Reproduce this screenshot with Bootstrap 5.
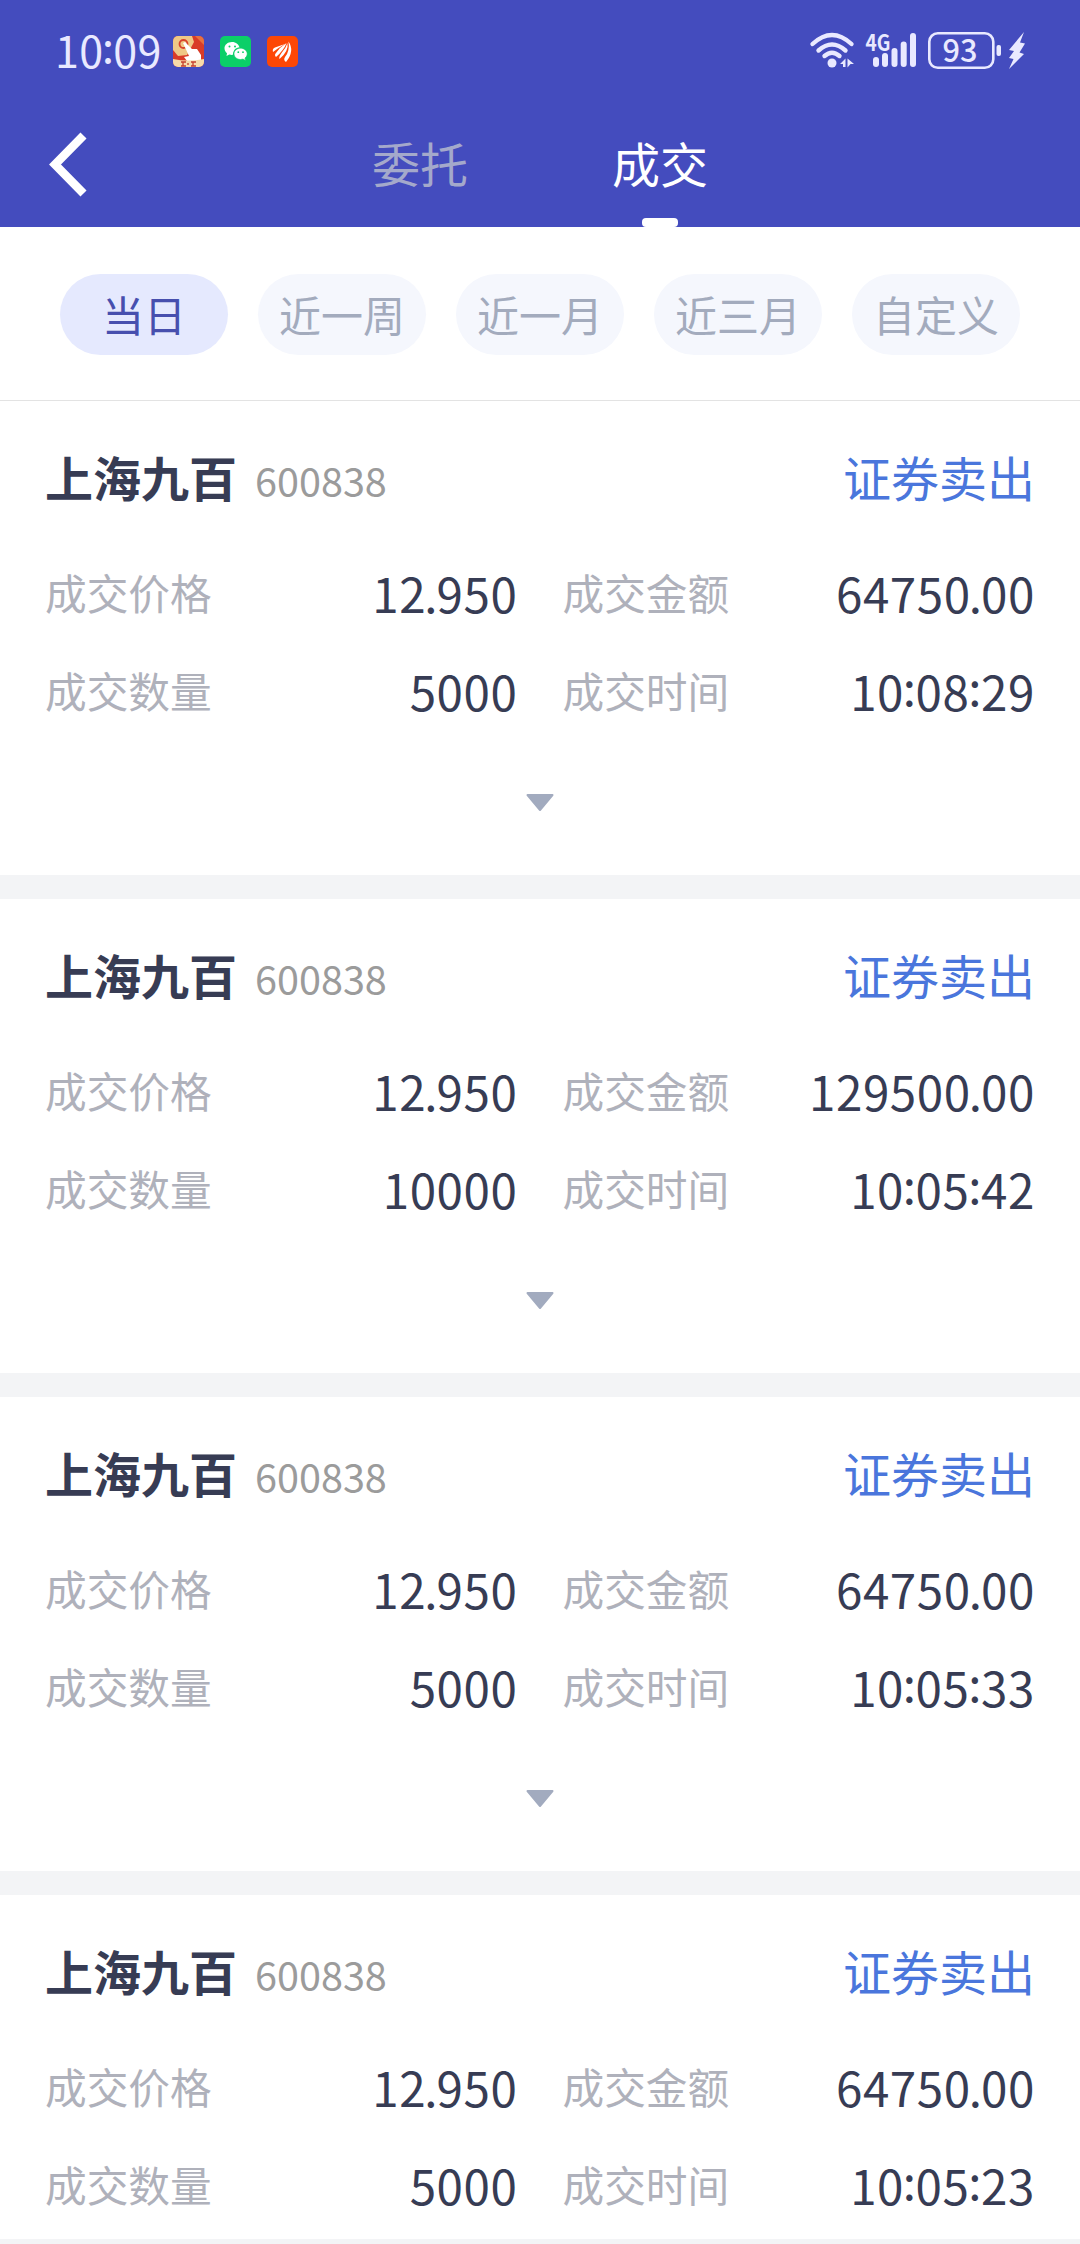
<!DOCTYPE html>
<html lang="zh-CN">
<head>
<meta charset="utf-8">
<meta name="viewport" content="width=device-width, initial-scale=1">
<title>成交</title>
<link href="https://cdn.jsdelivr.net/npm/bootstrap@5.3.0/dist/css/bootstrap.min.css" rel="stylesheet">
<style>
body{font-family:"Noto Sans CJK SC","Noto Sans",sans-serif;background:#fff;color:#373c54;width:1080px;height:2244px;overflow:hidden}
.top-area{background:#444cbe;height:227px}
.status-line{height:102px;padding:0 54px 0 55px;color:#e9e9ff}
.clock-text{font-size:43px;line-height:60px;letter-spacing:.3px;padding-bottom:4px}
.colon{position:relative;top:-5px;margin:0 -1px 0 -1.300px}
.point{margin-left:-2px;margin-right:-1.500px}
.app-icons{gap:16px;margin-left:11px}
.tab-line{height:125px;padding-left:48px}
.tab-item{width:240px;height:125px;font-size:48px;line-height:120px;color:#a4a9cb;text-align:center}
.tab-item.active{color:#fff}
.tab-item.active::after{content:"";position:absolute;left:102px;bottom:0;width:36px;height:9px;border-radius:4px;background:#fff}
.filters{height:174px;padding:2px 60px 0;gap:30px;border-bottom:1px solid #e3e3e3}
.filters .btn{width:168px;height:81px;padding:0 0 3px;border:0;font-size:42px;line-height:75px;background:#f5f7fd;color:#a3abbd}
.filters .btn.active{background:#e5e9fe;color:#474fae}
.deal{height:474px;padding:39px 45px 0}
.deal-gap{height:24px;background:#f3f4f6}
.deal-head{height:79px}
.stock-name{font-size:48px;line-height:72px;font-weight:700}
.stock-code{font-size:39.6px;line-height:72px;color:#9b9b9b;margin-left:18px}
.side{font-size:48px;line-height:72px;color:#4a76dc}
.pairs{gap:45px;height:98px}
.pairs>div{flex:1 1 0}
.field-label{font-size:41.700px;color:#afb1bb}
.field-value{font-size:47.500px;letter-spacing:.6px;padding-top:2px}
.more-toggle{margin-top:55px}
.last-strip{height:5px;background:#f3f4f6}
.deal.cut{height:344px;overflow:hidden}
</style>
<script src="https://cdn.jsdelivr.net/npm/bootstrap@5.3.0/dist/js/bootstrap.bundle.min.js"></script>
</head>
<body>
<header class="top-area">
  <div class="status-line d-flex align-items-center">
    <span class="clock-text">10<span class="colon">:</span>09</span>
    <div class="app-icons d-flex">
      <svg width="31" height="31" viewBox="0 0 31 31"><defs><clipPath id="rc"><rect width="31" height="31" rx="5"/></clipPath></defs><g clip-path="url(#rc)"><rect width="31" height="31" fill="#d93b28"/><path d="M0 0H19L21 6 14 19 5 20 0 14Z" fill="#efc886"/><path d="M22 0L31 0V9Z" fill="#e8703f"/><circle cx="10.500" cy="8" r="4" fill="none" stroke="#d8432c" stroke-width="1.800"/><path d="M10 7L12 6 19 13 24 13 28 19V25H14L11 21 16 20Z" fill="#fff"/><path d="M0 23Q15 26 31 23V31H0Z" fill="#f7dba9"/><path d="M8 26H13M10 26V30M8 30H13M15 27V29M18 26H23M20 26V30M18 30H23" stroke="#c6402d" stroke-width="1.300"/></g></svg>
      <svg width="31" height="31" viewBox="0 0 31 31"><rect width="31" height="31" rx="5" fill="#0bcf68"/><path d="M12 6C7.500 6 4.500 9 4.500 12.300 4.500 14.500 5.500 16 7 17.200L6.500 20 9.300 18.600C11 19 12 19 13 18.800 13 14 16 11.500 19.500 11.500 19 8.500 16 6 12 6Z" fill="#fff"/><path d="M20.500 12.200C16.800 12.200 14 14.700 14 17.800S16.800 23.500 20.500 23.500L23 23.100 25.500 24.500 25 22C26.500 21 27.200 19.500 27.200 17.800 27.200 14.700 24.200 12.200 20.500 12.200Z" fill="#fff" stroke="#0bcf68" stroke-width=".6"/><g fill="#0bcf68"><circle cx="9.500" cy="10.500" r="1"/><circle cx="15" cy="10.500" r="1"/><circle cx="18.300" cy="16.200" r=".9"/><circle cx="23" cy="16.200" r=".9"/></g></svg>
      <svg width="31" height="31" viewBox="0 0 31 31"><rect width="31" height="31" rx="5" fill="#fd4705"/><g fill="#fff"><path d="M6 16Q5 12.500 8 11.500Q13 9.500 18 8Q11 12 6 16Z"/><path d="M9 21Q7 19 9 17Q13 11 19.500 7Q17 14 9 21Z"/><path d="M12.500 23Q11.500 21 14.500 17Q19 12 20.500 7Q22 15 12.500 23Z"/><path d="M19 26Q16 24 18 21Q23 15 21.500 5.500Q28 15 19 26Z"/></g></svg>
    </div>
    <svg class="ms-auto" width="218" height="66" viewBox="807 18 218 66" fill="#e9e9ff">
      <g fill="none" stroke="#e9e9ff" stroke-width="4.400" stroke-linecap="round"><path d="M811.500 44Q831 26 850.500 44"/><path d="M817.500 50.500Q831 38.500 844.500 50.500"/><path d="M823.500 56Q831 49.500 838.500 56"/></g>
      <circle cx="831" cy="63" r="4.500"/><path d="M839 64L844.500 58.500V67H842V64ZM846.500 58.500L853 64H849.500L846.500 67.500Z"/>
      <text x="864.500" y="50.500" font-size="22" font-weight="700" textLength="25" lengthAdjust="spacingAndGlyphs" font-family="Noto Sans CJK SC, sans-serif">4G</text>
      <rect x="872" y="57" width="6" height="10" rx="3"/><rect x="881" y="53" width="6" height="14" rx="3"/><rect x="890.500" y="48" width="6" height="19" rx="3"/><rect x="899.700" y="41.500" width="6" height="25.500" rx="3"/><rect x="909" y="33" width="6" height="34" rx="3"/>
      <rect x="928.300" y="33.300" width="64" height="34.500" rx="8.500" fill="none" stroke="#e9e9ff" stroke-width="2.600"/>
      <text x="941.500" y="61.700" font-size="31" font-weight="500" textLength="35" lengthAdjust="spacingAndGlyphs" font-family="Noto Sans CJK SC, sans-serif">93</text>
      <rect x="995.500" y="45" width="4.500" height="11" rx="2"/>
      <path d="M1023 32L1008 50 1013 51 1008 58 1012.500 59 1008 69 1023 54 1018.500 52.500 1024 43.500 1019 42.500Z"/>
    </svg>
  </div>
  <nav class="tab-line d-flex align-items-center">
    <svg width="40" height="66" viewBox="48 132 40 66" fill="none" stroke="#fff" stroke-width="8.500"><path d="M83.500 135.500L55 164.500 83.500 193.500"/></svg>
    <div class="d-flex" style="margin-left:212px">
      <div class="tab-item">委托</div>
      <div class="tab-item active position-relative">成交</div>
    </div>
  </nav>
</header>
<div class="filters d-flex align-items-center">
  <button class="btn rounded-pill active">当日</button>
  <button class="btn rounded-pill">近一周</button>
  <button class="btn rounded-pill">近一月</button>
  <button class="btn rounded-pill">近三月</button>
  <button class="btn rounded-pill">自定义</button>
</div>
<main>
  <section class="deal">
    <div class="deal-head d-flex align-items-baseline"><span class="stock-name">上海九百</span><span class="stock-code">600838</span><span class="side ms-auto">证券卖出</span></div>
    <div class="mt-4">
      <div class="pairs d-flex"><div class="d-flex justify-content-between align-items-center"><span class="field-label">成交价格</span><span class="field-value">12<span class="point">.</span>950</span></div><div class="d-flex justify-content-between align-items-center"><span class="field-label">成交金额</span><span class="field-value">64750<span class="point">.</span>00</span></div></div>
      <div class="pairs d-flex"><div class="d-flex justify-content-between align-items-center"><span class="field-label">成交数量</span><span class="field-value">5000</span></div><div class="d-flex justify-content-between align-items-center"><span class="field-label">成交时间</span><span class="field-value">10<span class="colon">:</span>08<span class="colon">:</span>29</span></div></div>
    </div>
    <div class="more-toggle d-flex justify-content-center"><svg width="28" height="18" viewBox="0 0 28 18"><path d="M1.500 1H26.500L14 16Z" fill="#a2abbf" stroke="#a2abbf" stroke-width="2" stroke-linejoin="round"/></svg></div>
  </section>
  <div class="deal-gap"></div>
  <section class="deal">
    <div class="deal-head d-flex align-items-baseline"><span class="stock-name">上海九百</span><span class="stock-code">600838</span><span class="side ms-auto">证券卖出</span></div>
    <div class="mt-4">
      <div class="pairs d-flex"><div class="d-flex justify-content-between align-items-center"><span class="field-label">成交价格</span><span class="field-value">12<span class="point">.</span>950</span></div><div class="d-flex justify-content-between align-items-center"><span class="field-label">成交金额</span><span class="field-value">129500<span class="point">.</span>00</span></div></div>
      <div class="pairs d-flex"><div class="d-flex justify-content-between align-items-center"><span class="field-label">成交数量</span><span class="field-value">10000</span></div><div class="d-flex justify-content-between align-items-center"><span class="field-label">成交时间</span><span class="field-value">10<span class="colon">:</span>05<span class="colon">:</span>42</span></div></div>
    </div>
    <div class="more-toggle d-flex justify-content-center"><svg width="28" height="18" viewBox="0 0 28 18"><path d="M1.500 1H26.500L14 16Z" fill="#a2abbf" stroke="#a2abbf" stroke-width="2" stroke-linejoin="round"/></svg></div>
  </section>
  <div class="deal-gap"></div>
  <section class="deal">
    <div class="deal-head d-flex align-items-baseline"><span class="stock-name">上海九百</span><span class="stock-code">600838</span><span class="side ms-auto">证券卖出</span></div>
    <div class="mt-4">
      <div class="pairs d-flex"><div class="d-flex justify-content-between align-items-center"><span class="field-label">成交价格</span><span class="field-value">12<span class="point">.</span>950</span></div><div class="d-flex justify-content-between align-items-center"><span class="field-label">成交金额</span><span class="field-value">64750<span class="point">.</span>00</span></div></div>
      <div class="pairs d-flex"><div class="d-flex justify-content-between align-items-center"><span class="field-label">成交数量</span><span class="field-value">5000</span></div><div class="d-flex justify-content-between align-items-center"><span class="field-label">成交时间</span><span class="field-value">10<span class="colon">:</span>05<span class="colon">:</span>33</span></div></div>
    </div>
    <div class="more-toggle d-flex justify-content-center"><svg width="28" height="18" viewBox="0 0 28 18"><path d="M1.500 1H26.500L14 16Z" fill="#a2abbf" stroke="#a2abbf" stroke-width="2" stroke-linejoin="round"/></svg></div>
  </section>
  <div class="deal-gap"></div>
  <section class="deal cut">
    <div class="deal-head d-flex align-items-baseline"><span class="stock-name">上海九百</span><span class="stock-code">600838</span><span class="side ms-auto">证券卖出</span></div>
    <div class="mt-4">
      <div class="pairs d-flex"><div class="d-flex justify-content-between align-items-center"><span class="field-label">成交价格</span><span class="field-value">12<span class="point">.</span>950</span></div><div class="d-flex justify-content-between align-items-center"><span class="field-label">成交金额</span><span class="field-value">64750<span class="point">.</span>00</span></div></div>
      <div class="pairs d-flex"><div class="d-flex justify-content-between align-items-center"><span class="field-label">成交数量</span><span class="field-value">5000</span></div><div class="d-flex justify-content-between align-items-center"><span class="field-label">成交时间</span><span class="field-value">10<span class="colon">:</span>05<span class="colon">:</span>23</span></div></div>
    </div>
  </section>
  <div class="last-strip"></div>
</main>
</body>
</html>
